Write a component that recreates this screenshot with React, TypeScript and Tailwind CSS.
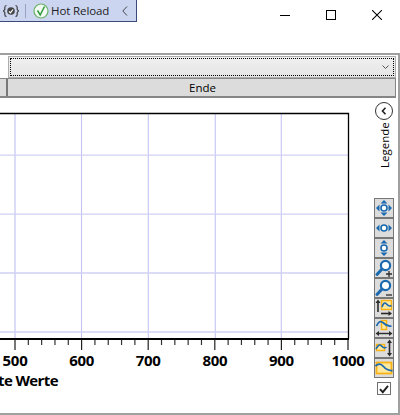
const BLUE = "#1b6ab0";
const DARK = "#2b2b2b";
const ORANGE = "#fbb313";
const PALE = "#fde8a0";

const xTicks = [500, 600, 700, 800, 900, 1000];
const xOf = (v: number) => 15 + ((v - 500) * 333) / 500;
const gridY = [155.2, 214.2, 273, 332];

const Arrows = ({ h, v }: { h?: boolean; v?: boolean }) => (
  <>
    <circle cx="9" cy="9" r="3" fill="#fff" stroke={BLUE} strokeWidth="1.6" />
    {h && <path d="M1 9l3.500-3.500v7zM17 9l-3.500-3.500v7z" fill={BLUE} />}
    {v && <path d="M9 1L5.500 4.500h7zM9 17l-3.500-3.500h7z" fill={BLUE} />}
  </>
);

const Zoom = ({ plus }: { plus?: boolean }) => (
  <>
    <circle cx="10.500" cy="6.500" r="4.600" fill="#fff" stroke={BLUE} strokeWidth="2.200" />
    <path d="M7 10L2 15.500" stroke={BLUE} strokeWidth="3" strokeLinecap="round" />
    <path d={plus ? "M11 15h6M14 12v6" : "M11 16h6"} stroke={DARK} strokeWidth="1.300" />
  </>
);

const tools = [
  <Arrows h v />,
  <Arrows h />,
  <Arrows v />,
  <Zoom plus />,
  <Zoom />,
  <>
    <rect x="6.500" y="1.500" width="10" height="9" fill={PALE} stroke={ORANGE} strokeWidth="1.400" />
    <path d="M7 8q2-6 4.500-3t5 1.500" fill="none" stroke={BLUE} strokeWidth="1.600" />
    <path d="M3 13V3" stroke={DARK} strokeWidth="1.600" />
    <path d="M3 0.500L0.500 4h5z" fill={DARK} />
    <path d="M6 14.500h8" stroke={DARK} strokeWidth="1.600" />
    <path d="M17 14.500L13.500 12v5z" fill={DARK} />
  </>,
  <>
    <rect x="6.500" y="1.500" width="5" height="9" fill={PALE} stroke={ORANGE} strokeWidth="1.400" />
    <path d="M1.500 7q3-7 7-3t8 3" fill="none" stroke={BLUE} strokeWidth="1.800" />
    <path d="M3 14.500h12" stroke={DARK} strokeWidth="1.400" />
    <path d="M0.500 14.500L4 12v5zM17.500 14.500L14 12v5z" fill={DARK} />
  </>,
  <>
    <rect x="1.500" y="5.500" width="8" height="6" fill={PALE} stroke={ORANGE} strokeWidth="1.400" />
    <path d="M1 10q3-6 5.500-3t5 1" fill="none" stroke={BLUE} strokeWidth="1.600" />
    <path d="M14.500 3v12" stroke={DARK} strokeWidth="1.600" />
    <path d="M14.500 0.500L12 4h5zM14.500 17.500L12 14h5z" fill={DARK} />
  </>,
  <>
    <rect x="1.500" y="3.500" width="15" height="11" fill={PALE} stroke={ORANGE} strokeWidth="1.800" />
    <path d="M0.500 7q4-4 8 0.500t9 4" fill="none" stroke={BLUE} strokeWidth="1.800" />
  </>,
];

const Chart = () => (
  <svg width="372" height="315" viewBox="0 98 372 315" className="shrink-0">
    {[15, 81.5, 148.3, 215.3, 281.3].map((x, i) => (
      <line key={x} x1={x} x2={x} y1="114" y2="338" stroke={i === 0 ? "#dcdcf9" : "#c4c4f4"} strokeWidth={i === 0 ? 2 : 1.1} />
    ))}
    {gridY.map((y) => (
      <line key={y} x1="0" x2="348" y1={y} y2={y} stroke="#d0d1f5" strokeWidth="1.300" />
    ))}
    <path d="M0 113.500H348.500V339" fill="none" stroke="#000" strokeWidth="1.300" />
    <line x1="0" x2="349" y1="339" y2="339" stroke="#000" strokeWidth="2" />
    {Array.from({ length: 26 }, (_, i) => {
      const x = 15 + (i * 333) / 25;
      if (i % 5 === 0) return null;
      return <line key={i} x1={x} x2={x} y1="340" y2="345" stroke="#333" strokeWidth="1.200" />;
    })}
    {xTicks.map((v, i) => (
      <line key={v} x1={xOf(v)} x2={xOf(v)} y1="340" y2="350" stroke={i % 5 === 0 ? "#777" : "#222"} strokeWidth={i % 5 === 0 ? 2 : 1.2} />
    ))}
    {xTicks.map((v) => (
      <text key={v} x={xOf(v)} y="366" textAnchor="middle" className="font-['Open_Sans',sans-serif] text-[15px] font-bold tracking-[-0.3px]" fill="#000">
        {v}
      </text>
    ))}
    <text x="58" y="386" textAnchor="end" className="font-['Open_Sans',sans-serif] text-[15px] font-bold tracking-[-0.6px]" fill="#000">
      te Werte
    </text>
  </svg>
);

export default function App() {
  return (
    <div className="w-[400px] h-[415px] bg-white overflow-hidden flex flex-col font-['Open_Sans',sans-serif] text-black">
      <div className="h-[53px] shrink-0 flex items-start justify-between">
        <div className="w-[137px] h-[22px] bg-[#ccd5f0] border-r border-b border-[#3b4a7a] flex items-center">
          <svg width="16" height="14" viewBox="0 0 16 14" className="ml-[3px]">
            <path d="M3.500 1.500Q1.800 1.500 1.800 3.500V5.500L0.500 7 1.800 8.500V10.500Q1.800 12.500 3.500 12.500M12.500 1.500Q14.200 1.500 14.200 3.500V5.500L15.500 7 14.200 8.500V10.500Q14.200 12.500 12.500 12.500" fill="none" stroke="#333" strokeWidth="1.100" />
            <circle cx="8" cy="7" r="3.800" fill="#444" />
            <path d="M6 7.500l1.500 1.300L10 5.500" fill="none" stroke="#fff" strokeWidth="1.200" />
          </svg>
          <div className="ml-[6px] w-px h-[14px] bg-[#9aa3c4]" />
          <svg width="16" height="16" viewBox="0 0 16 16" className="ml-[7px]">
            <circle cx="8" cy="8" r="7" fill="#f3faf3" stroke="#68b168" strokeWidth="1.200" />
            <path d="M4.500 7.500L7.200 12 11.500 3.500" fill="none" stroke="#2f9a3a" strokeWidth="1.500" />
          </svg>
          <span className="ml-[2px] text-[11.5px] tracking-[-0.1px] leading-none text-[#222]">Hot Reload</span>
          <svg width="6" height="10" viewBox="0 0 6 10" className="ml-auto mr-[8px]">
            <path d="M5 0.500L0.800 5 5 9.500" fill="none" stroke="#333" strokeWidth="0.900" />
          </svg>
        </div>
        <div className="flex">
          <div className="w-[46px] h-[30px] flex items-center justify-center">
            <svg width="10" height="10" viewBox="0 0 10 10"><path d="M0 5.500H10" stroke="#000" /></svg>
          </div>
          <div className="w-[46px] h-[30px] flex items-center justify-center">
            <svg width="10" height="10" viewBox="0 0 10 10"><rect x="0.500" y="0.500" width="9" height="9" fill="none" stroke="#000" /></svg>
          </div>
          <div className="w-[46px] h-[30px] flex items-center justify-center">
            <svg width="10" height="10" viewBox="0 0 10 10"><path d="M0 0L10 10M10 0L0 10" stroke="#000" strokeWidth="1.050" /></svg>
          </div>
        </div>
      </div>

      <div className="flex-1 min-h-0 border-t-2 border-r-2 border-b-2 border-[#a0a0a0] flex flex-col">
        <div className="pl-2 pr-[2px] pt-px h-[23px] shrink-0">
          <div className="h-full border border-[#acacac] bg-gradient-to-b from-[#f0f0f0] to-[#e5e5e5] p-px">
            <div className="h-full border border-dotted border-black flex items-center justify-end pr-[4px]">
              <svg width="7" height="5" viewBox="0 0 7 5"><path d="M0.500 0.500L3.500 3.500 6.500 0.500" fill="none" stroke="#555" /></svg>
            </div>
          </div>
        </div>
        <div className="h-[20px] shrink-0 flex mr-[2px] bg-[#dcdcdc] border-t border-b-2 border-r border-[#858585]">
          <div className="w-[8px] border-r-2 border-[#777]" />
          <div className="flex-1 pl-[2px] flex items-center justify-center text-[11.5px] leading-none">Ende</div>
        </div>

        <div className="flex-1 min-h-0 flex">
          <Chart />
          <div className="flex-1 flex flex-col items-start pl-[1px]">
            <div className="mt-[4px] ml-[2px] w-[18px] h-[18px] rounded-full border border-[#333] flex items-center justify-center">
              <svg width="6" height="8" viewBox="0 0 6 8"><path d="M4.500 0.800L1.500 4l3 3.200" fill="none" stroke="#222" strokeWidth="1.600" /></svg>
            </div>
            <div className="mt-[3px] ml-[6px] h-[45px] flex justify-center">
              <span className="[writing-mode:vertical-rl] rotate-180 text-[11.5px] leading-none">Legende</span>
            </div>
            <div className="mt-[30px] ml-[1px] flex flex-col">
              {tools.map((icon, i) => (
                <div key={i} className="w-[20px] h-[20px] bg-[#dcdcdc] border border-[#777] flex items-center justify-center">
                  <svg width="18" height="18" viewBox="0 0 18 18">{icon}</svg>
                </div>
              ))}
            </div>
            <div className="mt-[4px] ml-[4px] w-[14px] h-[13px] border border-[#707070] bg-white flex items-center justify-center">
              <svg width="10" height="10" viewBox="0 0 10 10"><path d="M1 5.200L3.800 8.200 9 1.800" fill="none" stroke="#222" strokeWidth="1.900" /></svg>
            </div>
          </div>
        </div>
      </div>
    </div>
  );
}
